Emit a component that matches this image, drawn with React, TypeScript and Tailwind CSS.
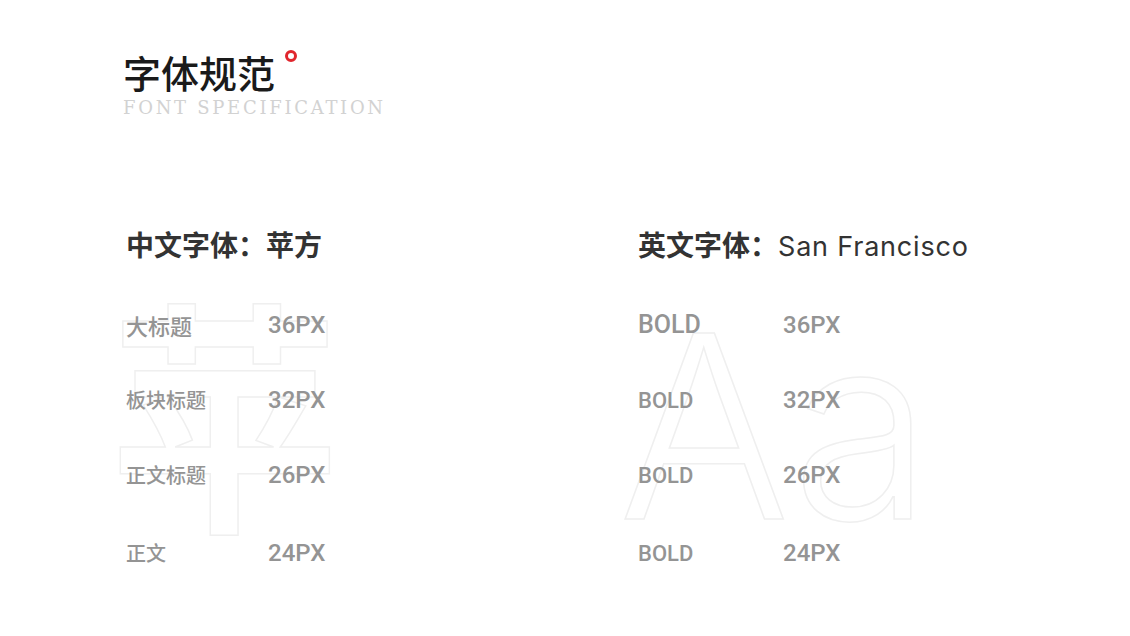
const CJK = "font-['Noto_Sans_CJK_SC',sans-serif]"

const leftRows = [
  { label: '大标题', size: 'text-[22px]', value: '36PX' },
  { label: '板块标题', size: 'text-[20px]', value: '32PX' },
  { label: '正文标题', size: 'text-[20px]', value: '26PX' },
  { label: '正文', size: 'text-[20px]', value: '24PX' },
]

const rightRows = [
  { label: 'BOLD', size: 'text-[25px]', value: '36PX' },
  { label: 'BOLD', size: 'text-[22px]', value: '32PX' },
  { label: 'BOLD', size: 'text-[22px]', value: '26PX' },
  { label: 'BOLD', size: 'text-[22px]', value: '24PX' },
]

function Rows({ rows, cjk, labelW, top }: { rows: typeof leftRows; cjk: boolean; labelW: string; top: string }) {
  return (
    <div className={`relative ${top} flex flex-col gap-[43px]`}>
      {rows.map((r, i) => (
        <div
          key={i}
          className={`flex h-[32px] items-center text-[#949494] ${i === 3 ? 'mt-[3px]' : ''}`}
        >
          <span
            className={`${labelW} ${r.size} ${cjk ? `${CJK} font-medium` : "font-['Roboto',sans-serif] font-medium"}`}
          >
            {r.label}
          </span>
          <span className="font-['Roboto',sans-serif] text-[24px] font-medium">{r.value}</span>
        </div>
      ))}
    </div>
  )
}

export default function App() {
  return (
    <div className="h-[636px] w-[1130px] overflow-hidden bg-white pl-[123px] pt-[46px]">
      {/* page title */}
      <div className="relative inline-block">
        <h1 className={`${CJK} text-[38px] font-medium leading-[52px] text-[#1a1a1a]`}>字体规范</h1>
        <span className="absolute -right-[22px] top-[4px] h-[12px] w-[12px] rounded-full border-[3px] border-[#e0262d]" />
      </div>
      <div className="font-['DejaVu_Serif',serif] text-[18px] leading-[20px] tracking-[2.7px] text-[#d2d2d2]">
        FONT SPECIFICATION
      </div>

      <div className="mt-[106px] grid grid-cols-[512px_1fr] pl-[3px]">
        {/* chinese font */}
        <div className="relative">
          <div
            className={`${CJK} pointer-events-none absolute left-[-16px] top-[60px] origin-left scale-x-[0.94] text-[244px] font-bold leading-none text-transparent [-webkit-text-stroke:1.5px_#efefef]`}
          >
            苹
          </div>
          <h2 className={`relative ${CJK} text-[28px] font-semibold leading-[40px] text-[#333]`}>中文字体：苹方</h2>
          <Rows rows={leftRows} cjk labelW="w-[142px]" top="mt-[45px]" />
        </div>

        {/* english font */}
        <div className="relative">
          <div className="pointer-events-none absolute left-[-20px] top-[74px] font-['Inter',sans-serif] text-[256px] font-light leading-none tracking-[1px] text-transparent [-webkit-text-stroke:1.5px_#efefef]">
            Aa
          </div>
          <h2 className="relative text-[28px] leading-[40px] text-[#333]">
            <span className={`${CJK} font-semibold`}>英文字体：</span>
            <span className="font-['Inter',sans-serif] text-[27px] tracking-[0.8px]">San Francisco</span>
          </h2>
          <Rows rows={rightRows} cjk={false} labelW="w-[145px]" top="mt-[42px]" />
        </div>
      </div>
    </div>
  )
}
